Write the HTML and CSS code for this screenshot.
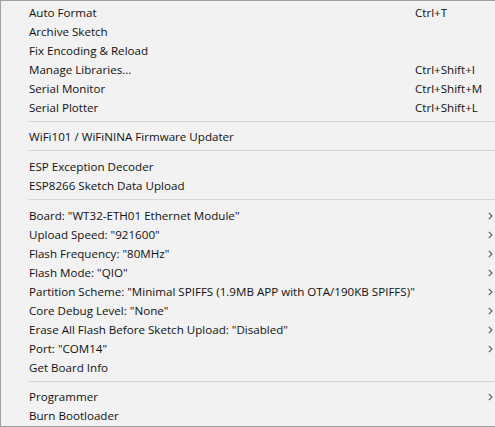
FILE: index.html
```html
<!DOCTYPE html>
<html>
<head>
<meta charset="utf-8">
<link rel="stylesheet" href="styles.css">
</head>
<body>
<div class="menu">
  <div class="item"><span class="label">Auto Format</span><span class="key">Ctrl+T</span></div>
  <div class="item"><span class="label">Archive Sketch</span></div>
  <div class="item"><span class="label">Fix Encoding &amp; Reload</span></div>
  <div class="item"><span class="label">Manage Libraries...</span><span class="key">Ctrl+Shift+I</span></div>
  <div class="item"><span class="label">Serial Monitor</span><span class="key">Ctrl+Shift+M</span></div>
  <div class="item"><span class="label">Serial Plotter</span><span class="key">Ctrl+Shift+L</span></div>
  <div class="sep"></div>
  <div class="item"><span class="label">WiFi101 / WiFiNINA Firmware Updater</span></div>
  <div class="sep wide"></div>
  <div class="item"><span class="label">ESP Exception Decoder</span></div>
  <div class="item"><span class="label">ESP8266 Sketch Data Upload</span></div>
  <div class="sep wide"></div>
  <div class="item sub"><span class="label">Board: "WT32-ETH01 Ethernet Module"</span><svg class="arrow" width="5" height="8" viewBox="0 0 5 8"><polyline points="0.8,0.8 4,4 0.8,7.2" /></svg></div>
  <div class="item sub"><span class="label">Upload Speed: "921600"</span><svg class="arrow" width="5" height="8" viewBox="0 0 5 8"><polyline points="0.8,0.8 4,4 0.8,7.2" /></svg></div>
  <div class="item sub"><span class="label">Flash Frequency: "80MHz"</span><svg class="arrow" width="5" height="8" viewBox="0 0 5 8"><polyline points="0.8,0.8 4,4 0.8,7.2" /></svg></div>
  <div class="item sub"><span class="label">Flash Mode: "QIO"</span><svg class="arrow" width="5" height="8" viewBox="0 0 5 8"><polyline points="0.8,0.8 4,4 0.8,7.2" /></svg></div>
  <div class="item sub"><span class="label">Partition Scheme: "Minimal SPIFFS (1.9MB APP with OTA/190KB SPIFFS)"</span><svg class="arrow" width="5" height="8" viewBox="0 0 5 8"><polyline points="0.8,0.8 4,4 0.8,7.2" /></svg></div>
  <div class="item sub"><span class="label">Core Debug Level: "None"</span><svg class="arrow" width="5" height="8" viewBox="0 0 5 8"><polyline points="0.8,0.8 4,4 0.8,7.2" /></svg></div>
  <div class="item sub"><span class="label">Erase All Flash Before Sketch Upload: "Disabled"</span><svg class="arrow" width="5" height="8" viewBox="0 0 5 8"><polyline points="0.8,0.8 4,4 0.8,7.2" /></svg></div>
  <div class="item sub"><span class="label">Port: "COM14"</span><svg class="arrow" width="5" height="8" viewBox="0 0 5 8"><polyline points="0.8,0.8 4,4 0.8,7.2" /></svg></div>
  <div class="item"><span class="label">Get Board Info</span></div>
  <div class="sep"></div>
  <div class="item sub"><span class="label">Programmer</span><svg class="arrow" width="5" height="8" viewBox="0 0 5 8"><polyline points="0.8,0.8 4,4 0.8,7.2" /></svg></div>
  <div class="item"><span class="label">Burn Bootloader</span></div>
</div>
</body>
</html>
```

FILE: styles.css
```css
html, body {
  margin: 0;
  padding: 0;
  background: #f2f2f2;
}

.menu {
  box-sizing: border-box;
  width: 495px;
  height: 427px;
  border-top: 1px solid #a0a0a0;
  border-left: 1px solid #a0a0a0;
  border-bottom: 1px solid #a0a0a0;
  background: #f2f2f2;
  padding-top: 2px;
  font-family: "Open Sans", "Noto Sans", sans-serif;
  font-size: 11.6px;
  color: #111111;
}

.item {
  height: 19px;
  display: flex;
  align-items: center;
  padding-left: 28px;
  white-space: nowrap;
}

.label {
  width: 386px;
  flex: none;
}

.key {
  flex: none;
}

.arrow {
  margin-left: 73px;
  flex: none;
}

.arrow polyline {
  fill: none;
  stroke: #5a5a5a;
  stroke-width: 1.1;
}

.sep {
  height: 1px;
  margin: 4px 0 5px 27px;
  background: #d7d7d7;
}

.sep.wide {
  margin-bottom: 6px;
}
```
